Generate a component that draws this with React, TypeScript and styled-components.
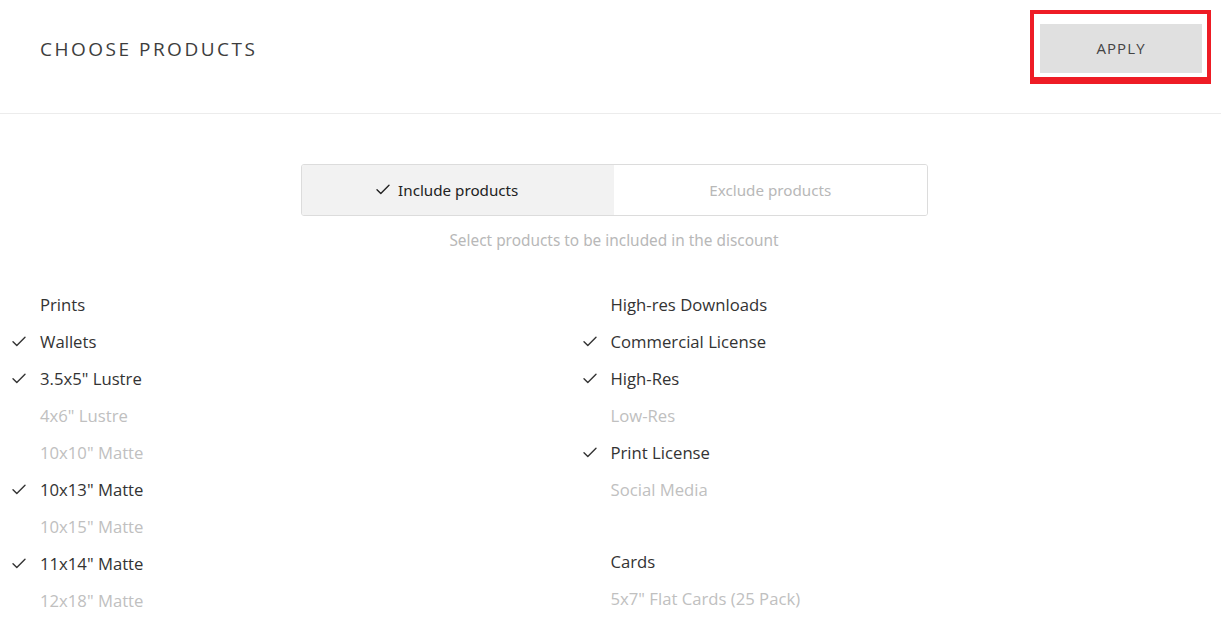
import React from "react";
import styled, { createGlobalStyle } from "styled-components";

const Global = createGlobalStyle`
  html, body { margin: 0; padding: 0; background: #fff; }
  body { font-family: "Open Sans", "Liberation Sans", sans-serif; color: #333; }
  * { box-sizing: border-box; }
`;

const Page = styled.div`
  width: 1221px;
  min-height: 619px;
  overflow: hidden;
`;

const Header = styled.header`
  height: 114px;
  border-bottom: 1px solid #ececec;
  display: flex;
  align-items: center;
  justify-content: space-between;
  padding: 0 10px 0 40px;
`;

const Title = styled.h1`
  margin: 0;
  font-size: 19px;
  font-weight: 400;
  letter-spacing: 2.5px;
  color: #3d3d3d;
  text-transform: uppercase;
  position: relative;
  top: -8px;
`;

const Highlight = styled.div`
  border: 4px solid #ee1c25;
  border-bottom-width: 7px;
  padding: 10px 5px 4px 6px;
  margin-top: -20px;
`;

const ApplyButton = styled.button`
  display: block;
  width: 162px;
  height: 49px;
  border: none;
  background: #e0e0e0;
  font-family: "Open Sans", "Liberation Sans", sans-serif;
  font-size: 15px;
  letter-spacing: 1.1px;
  color: #444;
  cursor: pointer;
`;

const Body = styled.main`
  display: flex;
  flex-direction: column;
  align-items: center;
  padding-top: 50px;
`;

const Intro = styled.div`
  display: flex;
  flex-direction: column;
  align-items: center;
  padding-left: 7px;
`;

const Toggle = styled.div`
  width: 627px;
  height: 52px;
  border: 1px solid #dcdcdc;
  border-radius: 3px;
  display: grid;
  grid-template-columns: 1fr 1fr;
  overflow: hidden;
`;

const ToggleOption = styled.div<{ $active?: boolean }>`
  display: flex;
  align-items: center;
  justify-content: center;
  gap: 8px;
  padding-right: ${(p) => (p.$active ? "21px" : "0")};
  font-family: "Noto Sans", "Open Sans", sans-serif;
  font-size: 15.2px;
  background: ${(p) => (p.$active ? "#f2f2f2" : "#fff")};
  color: ${(p) => (p.$active ? "#222" : "#b8b8b8")};
`;

const Subtitle = styled.p`
  margin: 14px 0 0;
  font-family: "Noto Sans", "Open Sans", sans-serif;
  font-size: 15.4px;
  color: #b8b8b8;
`;

const Columns = styled.div`
  align-self: stretch;
  display: grid;
  grid-template-columns: 1fr 1fr;
  padding: 35px 40px 0;
`;

const Column = styled.div`
  display: flex;
  flex-direction: column;
`;

const Group = styled.div`
  display: flex;
  flex-direction: column;
  & + & {
    margin-top: 35px;
  }
`;

const Row = styled.div<{ $muted?: boolean }>`
  height: 37px;
  display: flex;
  align-items: center;
  margin-left: -28px;
  font-size: 16.7px;
  white-space: nowrap;
  color: ${(p) => (p.$muted ? "#c0c0c0" : "#333")};
`;

const CheckCell = styled.span`
  width: 28px;
  flex: none;
  display: flex;
  align-items: center;
`;

const Check = ({ size = 14, color = "#333" }: { size?: number; color?: string }) => (
  <svg width={size} height={size * 0.8} viewBox="0 0 14 11" fill="none">
    <path d="M1 5.6 L4.8 9.4 L13 1.2" stroke={color} strokeWidth="1.4" strokeLinecap="round" strokeLinejoin="round" />
  </svg>
);

type Item = { label: string; checked?: boolean; muted?: boolean };

const left: Item[][] = [
  [
    { label: "Prints" },
    { label: "Wallets", checked: true },
    { label: '3.5x5" Lustre', checked: true },
    { label: '4x6" Lustre', muted: true },
    { label: '10x10" Matte', muted: true },
    { label: '10x13" Matte', checked: true },
    { label: '10x15" Matte', muted: true },
    { label: '11x14" Matte', checked: true },
    { label: '12x18" Matte', muted: true },
  ],
];

const right: Item[][] = [
  [
    { label: "High-res Downloads" },
    { label: "Commercial License", checked: true },
    { label: "High-Res", checked: true },
    { label: "Low-Res", muted: true },
    { label: "Print License", checked: true },
    { label: "Social Media", muted: true },
  ],
  [{ label: "Cards" }, { label: '5x7" Flat Cards (25 Pack)', muted: true }],
];

const renderColumn = (groups: Item[][]) => (
  <Column>
    {groups.map((g, gi) => (
      <Group key={gi}>
        {g.map((it) => (
          <Row key={it.label} $muted={it.muted}>
            <CheckCell>{it.checked && <Check />}</CheckCell>
            {it.label}
          </Row>
        ))}
      </Group>
    ))}
  </Column>
);

export default function App() {
  return (
    <Page>
      <Global />
      <Header>
        <Title>Choose Products</Title>
        <Highlight>
          <ApplyButton>APPLY</ApplyButton>
        </Highlight>
      </Header>
      <Body>
        <Intro>
          <Toggle>
            <ToggleOption $active>
              <Check size={14} color="#222" />
              Include products
            </ToggleOption>
            <ToggleOption>Exclude products</ToggleOption>
          </Toggle>
          <Subtitle>Select products to be included in the discount</Subtitle>
        </Intro>
        <Columns>
          {renderColumn(left)}
          {renderColumn(right)}
        </Columns>
      </Body>
    </Page>
  );
}
